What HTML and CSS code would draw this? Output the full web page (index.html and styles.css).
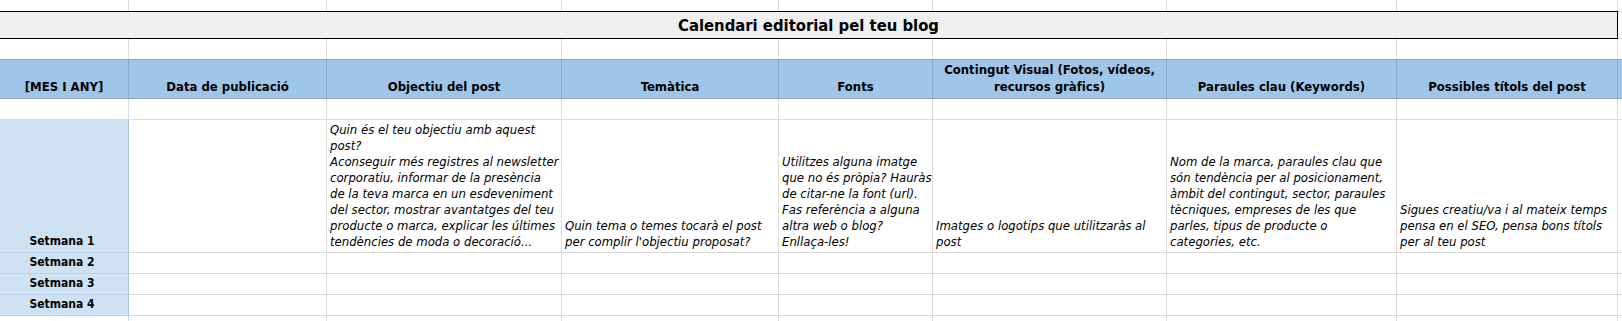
FILE: index.html
```html
<!DOCTYPE html>
<html lang="ca">
<head>
<meta charset="utf-8">
<title>Calendari editorial pel teu blog</title>
<link rel="stylesheet" href="styles.css">
</head>
<body>
<div class="sheet">
  <!-- row 0 -->
  <div class="c r0"></div><div class="c r0"></div><div class="c r0"></div><div class="c r0"></div><div class="c r0"></div><div class="c r0"></div><div class="c r0"></div><div class="c r0"></div><div class="c r0"></div>

  <!-- title row -->
  <div class="title">Calendari editorial pel teu blog</div>
  <div class="c rt"></div>

  <!-- spacer row -->
  <div class="c r2"></div><div class="c r2"></div><div class="c r2"></div><div class="c r2"></div><div class="c r2"></div><div class="c r2"></div><div class="c r2"></div><div class="c r2"></div><div class="c r2"></div>

  <!-- header row -->
  <div class="h">[MES I ANY]</div>
  <div class="h">Data de publicació</div>
  <div class="h">Objectiu del post</div>
  <div class="h">Temàtica</div>
  <div class="h">Fonts</div>
  <div class="h">Contingut Visual (Fotos, vídeos,<br>recursos gràfics)</div>
  <div class="h">Paraules clau (Keywords)</div>
  <div class="h">Possibles títols del post</div>
  <div class="h"></div>

  <!-- empty row -->
  <div class="c"></div><div class="c"></div><div class="c"></div><div class="c"></div><div class="c"></div><div class="c"></div><div class="c"></div><div class="c"></div><div class="c"></div>

  <!-- Setmana 1 -->
  <div class="wk">Setmana 1</div>
  <div class="c"></div>
  <div class="c t">Quin és el teu objectiu amb aquest<br>post?<br>Aconseguir més registres al newsletter<br>corporatiu, informar de la presència<br>de la teva marca en un esdeveniment<br>del sector, mostrar avantatges del teu<br>producte o marca, explicar les últimes<br>tendències de moda o decoració...</div>
  <div class="c t">Quin tema o temes tocarà el post<br>per complir l'objectiu proposat?</div>
  <div class="c t">Utilitzes alguna imatge<br>que no és pròpia? Hauràs<br>de citar-ne la font (url).<br>Fas referència a alguna<br>altra web o blog?<br>Enllaça-les!</div>
  <div class="c t">Imatges o logotips que utilitzaràs al<br>post</div>
  <div class="c t">Nom de la marca, paraules clau que<br>són tendència per al posicionament,<br>àmbit del contingut, sector, paraules<br>tècniques, empreses de les que<br>parles, tipus de producte o<br>categories, etc.</div>
  <div class="c t">Sigues creatiu/va i al mateix temps<br>pensa en el SEO, pensa bons títols<br>per al teu post</div>
  <div class="c"></div>

  <!-- Setmana 2 -->
  <div class="wk">Setmana 2</div>
  <div class="c"></div><div class="c"></div><div class="c"></div><div class="c"></div><div class="c"></div><div class="c"></div><div class="c"></div><div class="c"></div>

  <!-- Setmana 3 -->
  <div class="wk">Setmana 3</div>
  <div class="c"></div><div class="c"></div><div class="c"></div><div class="c"></div><div class="c"></div><div class="c"></div><div class="c"></div><div class="c"></div>

  <!-- Setmana 4 -->
  <div class="wk">Setmana 4</div>
  <div class="c"></div><div class="c"></div><div class="c"></div><div class="c"></div><div class="c"></div><div class="c"></div><div class="c"></div><div class="c"></div>

  <!-- trailing row -->
  <div class="c"></div><div class="c"></div><div class="c"></div><div class="c"></div><div class="c"></div><div class="c"></div><div class="c"></div><div class="c"></div><div class="c"></div>
</div>
</body>
</html>
```

FILE: styles.css
```css
* { box-sizing: border-box; }

html, body {
  margin: 0;
  padding: 0;
  background: #ffffff;
  overflow: hidden;
}

body {
  font-family: "DejaVu Sans Condensed", "DejaVu Sans", sans-serif;
  font-stretch: condensed;
  color: #000;
}

.sheet {
  display: grid;
  grid-template-columns: 129px 198px 235px 217px 154px 234px 230px 221px 1fr;
  grid-template-rows: 11px 28px 20px 40px 21px 133px 21px 21px 21px 20px;
  width: 1622px;
}

.c {
  border-right: 1px solid #dadada;
  border-bottom: 1px solid #dadada;
  background: #fff;
}

.r0, .r2 { border-bottom: none; }

.rt { border-top: 1px solid #dadada; }

.title {
  grid-column: 1 / 9;
  display: flex;
  align-items: center;
  justify-content: center;
  background: #efefef;
  border-top: 1px solid #000;
  border-bottom: 1px solid #000;
  border-right: 1px solid #000;
  font-weight: 700;
  font-size: 16.5px;
  line-height: 20px;
  padding-top: 1px;
}

.h {
  display: flex;
  align-items: flex-end;
  justify-content: center;
  text-align: center;
  background: #9fc5e8;
  border-top: 1px solid #89abcc;
  border-bottom: 1px solid #89abcc;
  border-right: 1px solid #89abcc;
  font-weight: 700;
  font-size: 13px;
  line-height: 17px;
  padding: 0 3px 3px;
  white-space: nowrap;
}

.wk {
  display: flex;
  align-items: flex-end;
  justify-content: center;
  background: #cfe2f3;
  border-right: 1px solid #aac5df;
  border-bottom: 1px solid #b9d0e6;
  font-weight: 700;
  font-size: 12px;
  line-height: 17px;
  padding: 0 4px 2px 0;
}

.t {
  display: flex;
  flex-direction: column;
  justify-content: flex-end;
  font-style: italic;
  font-size: 13px;
  line-height: 16px;
  padding: 0 3px 2px;
  white-space: nowrap;
  overflow: visible;
}
```
